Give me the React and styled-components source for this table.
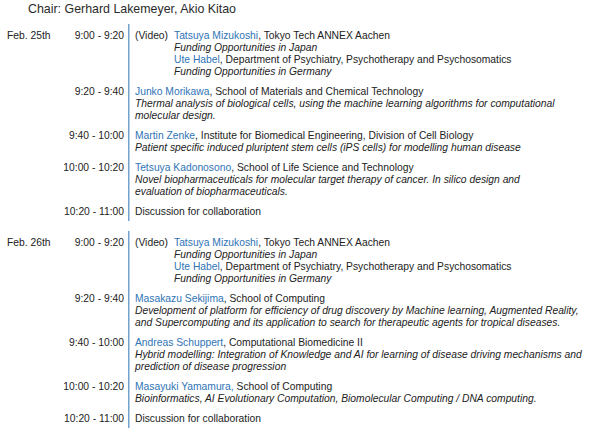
import React from "react";
import styled, { createGlobalStyle } from "styled-components";

const GlobalStyle = createGlobalStyle`
  body {
    margin: 0;
    background: #ffffff;
    font-family: "Liberation Sans", Arial, sans-serif;
    color: #222222;
  }
`;

const days = [
  {
    date: "Feb. 25th",
    rows: [
      {
        time: "9:00 - 9:20",
        video: true,
        speakers: [
          {
            name: "Tatsuya Mizukoshi",
            org: "Tokyo Tech ANNEX Aachen",
            title: ["Funding Opportunities in Japan"],
          },
          {
            name: "Ute Habel",
            org: "Department of Psychiatry, Psychotherapy and Psychosomatics",
            title: ["Funding Opportunities in Germany"],
          },
        ],
      },
      {
        time: "9:20 - 9:40",
        speakers: [
          {
            name: "Junko Morikawa",
            org: "School of Materials and Chemical Technology",
            title: [
              "Thermal analysis of biological cells, using the machine learning algorithms for computational",
              "molecular design.",
            ],
          },
        ],
      },
      {
        time: "9:40 - 10:00",
        speakers: [
          {
            name: "Martin Zenke",
            org: "Institute for Biomedical Engineering, Division of Cell Biology",
            title: [
              "Patient specific induced pluriptent stem cells (iPS cells) for modelling human disease",
            ],
          },
        ],
      },
      {
        time: "10:00 - 10:20",
        speakers: [
          {
            name: "Tetsuya Kadonosono",
            org: "School of Life Science and Technology",
            title: [
              "Novel biopharmaceuticals for molecular target therapy of cancer. In silico design and",
              "evaluation of biopharmaceuticals.",
            ],
          },
        ],
      },
      { time: "10:20 - 11:00", text: "Discussion for collaboration" },
    ],
  },
  {
    date: "Feb. 26th",
    rows: [
      {
        time: "9:00 - 9:20",
        video: true,
        speakers: [
          {
            name: "Tatsuya Mizukoshi",
            org: "Tokyo Tech ANNEX Aachen",
            title: ["Funding Opportunities in Japan"],
          },
          {
            name: "Ute Habel",
            org: "Department of Psychiatry, Psychotherapy and Psychosomatics",
            title: ["Funding Opportunities in Germany"],
          },
        ],
      },
      {
        time: "9:20 - 9:40",
        speakers: [
          {
            name: "Masakazu Sekijima",
            org: "School of Computing",
            title: [
              "Development of platform for efficiency of drug discovery by Machine learning, Augmented Reality,",
              "and Supercomputing and its application to search for therapeutic agents for tropical diseases.",
            ],
          },
        ],
      },
      {
        time: "9:40 - 10:00",
        speakers: [
          {
            name: "Andreas Schuppert",
            org: "Computational Biomedicine II",
            title: [
              "Hybrid modelling: Integration of Knowledge and AI for learning of disease driving mechanisms and",
              "prediction of disease progression",
            ],
          },
        ],
      },
      {
        time: "10:00 - 10:20",
        speakers: [
          {
            name: "Masayuki Yamamura",
            org: "School of Computing",
            blueComma: true,
            title: [
              "Bioinformatics, AI Evolutionary Computation, Biomolecular Computing / DNA computing.",
            ],
          },
        ],
      },
      { time: "10:20 - 11:00", text: "Discussion for collaboration" },
    ],
  },
];

function App() {
  return (
    <Page>
      <GlobalStyle />
      <Chair>Chair: Gerhard Lakemeyer, Akio Kitao</Chair>
      {days.map((day) => (
        <Day key={day.date}>
          <DateLabel>{day.date}</DateLabel>
          <Timeline>
            {day.rows.map((row) => (
              <React.Fragment key={row.time}>
                <Time>{row.time}</Time>
                <Content>
                  {row.text ? (
                    <Line>{row.text}</Line>
                  ) : (
                    <>
                      {row.video && <VideoTag>(Video)</VideoTag>}
                      <Speakers>
                        {row.speakers.map((s) => (
                          <div key={s.name}>
                            <Line>
                              <Name>{s.name}</Name>
                              {s.blueComma ? <Name>,</Name> : ","} {s.org}
                            </Line>
                            {s.title.map((t) => (
                              <Title key={t}>{t}</Title>
                            ))}
                          </div>
                        ))}
                      </Speakers>
                    </>
                  )}
                </Content>
              </React.Fragment>
            ))}
          </Timeline>
        </Day>
      ))}
    </Page>
  );
}

const Page = styled.div`
  width: 602px;
  height: 435px;
  padding: 2px 0 0 7px;
  box-sizing: border-box;
  overflow: hidden;
  display: flex;
  flex-direction: column;
  gap: 7px;
`;

const Chair = styled.div`
  font-size: 12.4px;
  line-height: 15px;
  color: #2b2b2b;
  padding-left: 21px;
`;

const Day = styled.div`
  display: flex;
  font-size: 10.3px;
  line-height: 12px;
  & + & {
    margin-top: 3px;
  }
`;

const DateLabel = styled.div`
  width: 55px;
  flex: 0 0 55px;
  padding-top: 6px;
`;

const Timeline = styled.div`
  flex: 1;
  display: grid;
  grid-template-columns: 62px 1fr;
  row-gap: 8px;
  padding: 6px 0 3px;
  background-image: linear-gradient(#72a2ce, #72a2ce);
  background-size: 1.5px 100%;
  background-position: 66px 0;
  background-repeat: no-repeat;
`;

const Time = styled.div`
  text-align: right;
  white-space: nowrap;
`;

const Content = styled.div`
  display: flex;
  padding-left: 11px;
  white-space: nowrap;
`;

const VideoTag = styled.div`
  flex: 0 0 39px;
`;

const Speakers = styled.div`
  display: flex;
  flex-direction: column;
`;

const Line = styled.div``;

const Name = styled.span`
  color: #2f74b5;
`;

const Title = styled.div`
  font-style: italic;
`;

export default App;
